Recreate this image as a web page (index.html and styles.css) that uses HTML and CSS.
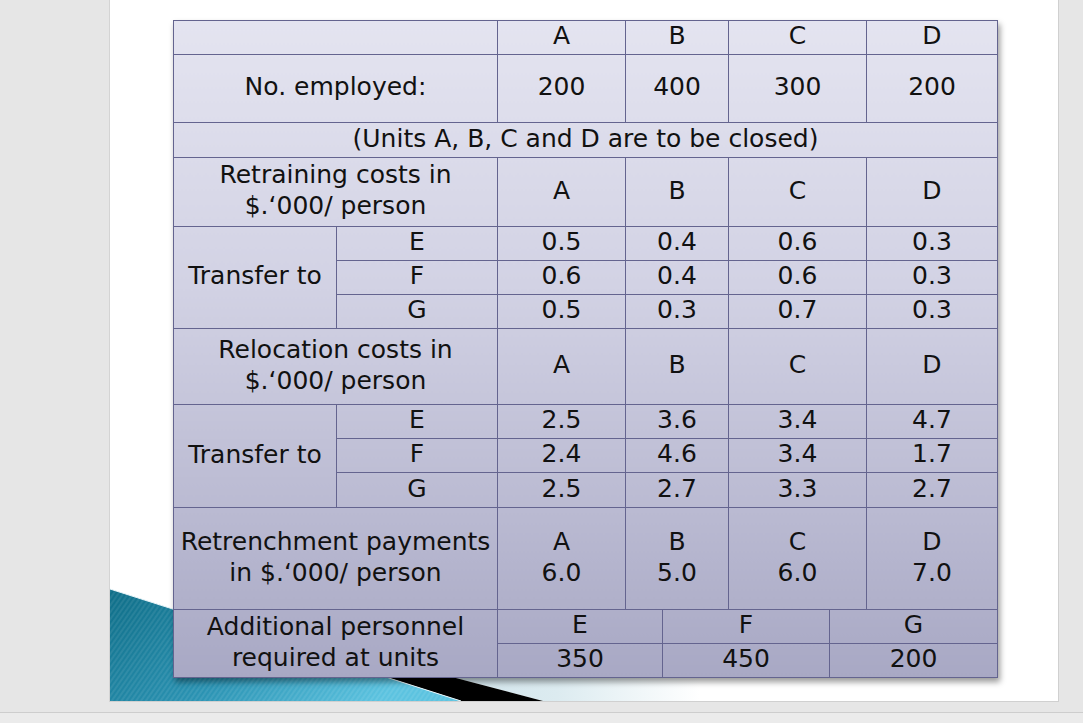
FILE: index.html
```html
<!DOCTYPE html>
<html>
<head>
<meta charset="utf-8">
<link rel="stylesheet" href="styles.css">
</head>
<body>
<div class="screen">
  <div class="slide">
    <svg class="swoosh" width="600" height="125" viewBox="0 0 600 125" xmlns="http://www.w3.org/2000/svg">
      <defs>
        <linearGradient id="teal" x1="0" y1="0" x2="1" y2="0.4">
          <stop offset="0" stop-color="#0f6e88"/>
          <stop offset="0.55" stop-color="#2b93b3"/>
          <stop offset="1" stop-color="#5cc3e0"/>
        </linearGradient>
        <pattern id="stripes" width="4" height="4" patternUnits="userSpaceOnUse" patternTransform="rotate(35)">
          <rect width="2" height="4" fill="#ffffff" fill-opacity="0.08"/>
        </pattern>
        <linearGradient id="pale" x1="330" y1="0" x2="590" y2="0" gradientUnits="userSpaceOnUse">
          <stop offset="0" stop-color="#cfe3eb"/>
          <stop offset="0.45" stop-color="#dcebf0"/>
          <stop offset="1" stop-color="#ffffff"/>
        </linearGradient>
      </defs>
      <polygon points="148,50 600,50 600,125 433,125" fill="url(#pale)"/>
      <polygon points="116,50 148,50 433,125 351,125" fill="#000"/>
      <polygon points="0,13 351,125 0,125" fill="url(#teal)"/>
      <polygon points="0,13 351,125 0,125" fill="url(#stripes)"/>
      <line x1="0" y1="13" x2="351" y2="125" stroke="#e8f4f8" stroke-width="1"/>
    </svg>
    <table class="data">
      <colgroup>
        <col class="c1"><col class="c2"><col class="c3"><col class="c4">
        <col class="c5"><col class="c6"><col class="c7"><col class="c8">
      </colgroup>
      <tr class="h34">
        <td colspan="2"></td><td>A</td><td colspan="2">B</td><td colspan="2">C</td><td>D</td>
      </tr>
      <tr class="h68">
        <td colspan="2">No. employed:</td><td>200</td><td colspan="2">400</td><td colspan="2">300</td><td>200</td>
      </tr>
      <tr class="h35">
        <td colspan="8">(Units A, B, C and D are to be closed)</td>
      </tr>
      <tr class="h69">
        <td colspan="2" class="two">Retraining costs in<br>$.‘000/ person</td><td>A</td><td colspan="2">B</td><td colspan="2">C</td><td>D</td>
      </tr>
      <tr class="h34">
        <td rowspan="3">Transfer to</td><td>E</td><td>0.5</td><td colspan="2">0.4</td><td colspan="2">0.6</td><td>0.3</td>
      </tr>
      <tr class="h34">
        <td>F</td><td>0.6</td><td colspan="2">0.4</td><td colspan="2">0.6</td><td>0.3</td>
      </tr>
      <tr class="h34">
        <td>G</td><td>0.5</td><td colspan="2">0.3</td><td colspan="2">0.7</td><td>0.3</td>
      </tr>
      <tr class="h76">
        <td colspan="2" class="two">Relocation costs in<br>$.‘000/ person</td><td>A</td><td colspan="2">B</td><td colspan="2">C</td><td>D</td>
      </tr>
      <tr class="h34">
        <td rowspan="3">Transfer to</td><td>E</td><td>2.5</td><td colspan="2">3.6</td><td colspan="2">3.4</td><td>4.7</td>
      </tr>
      <tr class="h34">
        <td>F</td><td>2.4</td><td colspan="2">4.6</td><td colspan="2">3.4</td><td>1.7</td>
      </tr>
      <tr class="h35">
        <td>G</td><td>2.5</td><td colspan="2">2.7</td><td colspan="2">3.3</td><td>2.7</td>
      </tr>
      <tr class="h102">
        <td colspan="2" class="two">Retrenchment payments<br>in $.‘000/ person</td><td class="two">A<br>6.0</td><td colspan="2" class="two">B<br>5.0</td><td colspan="2" class="two">C<br>6.0</td><td class="two">D<br>7.0</td>
      </tr>
      <tr class="h34">
        <td colspan="2" rowspan="2" class="two">Additional personnel<br>required at units</td><td colspan="2">E</td><td colspan="2">F</td><td colspan="2">G</td>
      </tr>
      <tr class="h34">
        <td colspan="2">350</td><td colspan="2">450</td><td colspan="2">200</td>
      </tr>
    </table>
  </div>
</div>
<div class="statusbar"></div>
</body>
</html>
```
FILE: styles.css
```css
html, body {
  margin: 0;
  padding: 0;
}
body {
  background: #e6e6e6;
  overflow: hidden;
  font-family: "DejaVu Sans", "Liberation Sans", sans-serif;
  width: 1083px;
  height: 723px;
}
.screen {
  padding-left: 109px;
  height: 712px;
}
.slide {
  position: relative;
  width: 950px;
  height: 702px;
  background: #ffffff;
  border-left: 1px solid #d4d4d4;
  border-right: 1px solid #d0d0d0;
  border-bottom: 1px solid #d0d0d0;
  padding: 20px 0 0 63px;
  box-sizing: border-box;
}
.swoosh {
  position: absolute;
  left: 0;
  bottom: 0;
  display: block;
}
.statusbar {
  height: 10px;
  border-top: 1px solid #cdcdcd;
  background: #ebebeb;
}
.data {
  position: relative;
  z-index: 1;
  border-collapse: collapse;
  table-layout: fixed;
  width: 824px;
  background: linear-gradient(180deg, #e4e4f0 0%, #d2d2e4 40%, #a8a8c4 100%);
  box-shadow: 2px 4px 6px rgba(0, 0, 0, 0.4);
  color: #111111;
  font-size: 25px;
}
.c1 { width: 163px; }
.c2 { width: 161px; }
.c3 { width: 128px; }
.c4 { width: 37px; }
.c5 { width: 66px; }
.c6 { width: 101px; }
.c7 { width: 37px; }
.c8 { width: 131px; }
.data td {
  border: 1px solid #64648f;
  padding: 0 0 4px 0;
  line-height: 27px;
  text-align: center;
  vertical-align: middle;
  white-space: nowrap;
}
.data td.two {
  line-height: 31px;
}
.h34 { height: 34px; }
.h35 { height: 35px; }
.h68 { height: 68px; }
.h69 { height: 69px; }
.h76 { height: 76px; }
.h102 { height: 102px; }
```
